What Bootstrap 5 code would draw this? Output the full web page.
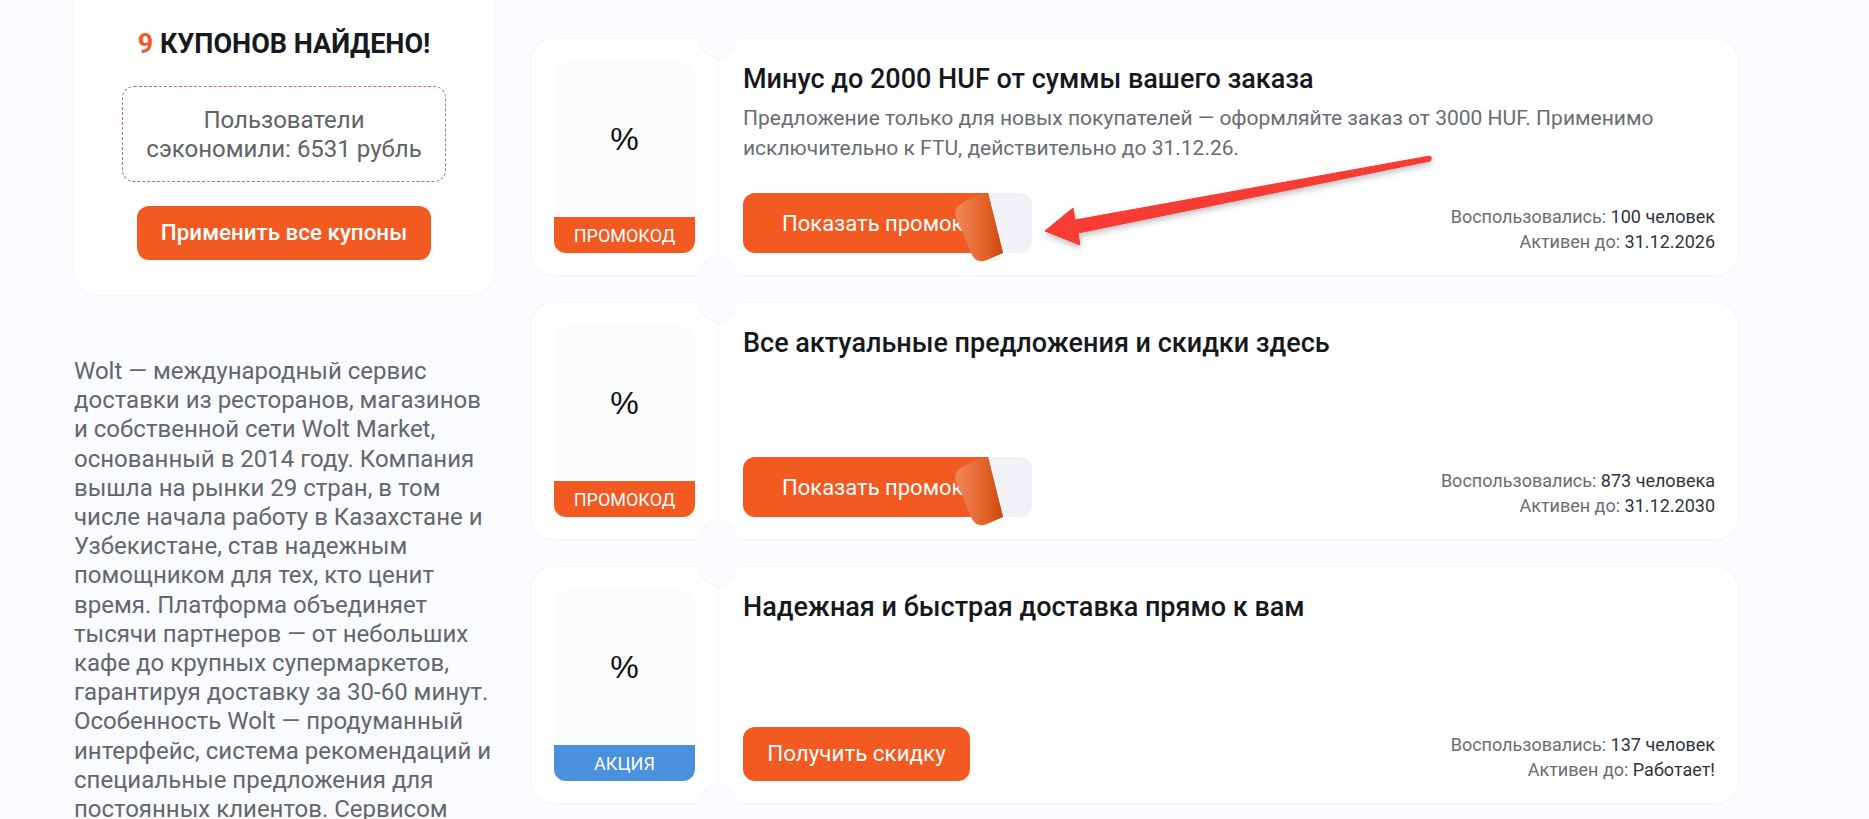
<!DOCTYPE html>
<html lang="ru">
<head>
  <meta charset="UTF-8" />
  <meta name="viewport" content="width=device-width, initial-scale=1.0" />
  <title>Купоны Wolt</title>
  <link href="https://cdn.jsdelivr.net/npm/bootstrap@5.3.3/dist/css/bootstrap.min.css" rel="stylesheet" />
  <style>
    html, body { height: 819px; overflow: hidden; }
    body { background: #fafbfe; font-family: Roboto, "Liberation Sans", sans-serif; color: #111; }
    .page-wrap { padding-left: 73px; gap: 35px; position: relative; }

    .side-col { width: 422px; flex: none; }
    .side-card {
      background: #fff;
      height: 296px;
      padding-top: 26px;
      border-radius: 0 0 26px 26px;
      border: 1px solid #f4f5fa;
      border-top: 0;
    }
    .side-title { font-size: 27px; line-height: 37px; font-weight: 700; color: #161a1f; margin: 0 0 23px; text-transform: uppercase; white-space: nowrap; }
    .side-title span { color: #ec5c28; }
    .saved-box {
      width: 324px;
      height: 96px;
      margin-bottom: 24px;
      padding-top: 19px;
      font-size: 24px;
      line-height: 29px;
      color: #5f6369;
      border: 1px dashed #c9705a;
      border-radius: 12px;
    }
    .btn-orange {
      background: #f35a22;
      color: #fff;
      border: 0;
      border-radius: 12px;
      font-size: 22.4px;
      font-weight: 400;
      height: 54px;
    }
    .btn-orange:hover { background: #e54f19; color: #fff; }
    .btn-all { width: 294px; font-weight: 500; padding: 0; }
    .side-text { margin-top: 61px; margin-left: 1px; font-size: 24px; line-height: 29.2px; color: #63676d; }

    .coupons { width: 1209px; flex: none; padding-top: 38px; gap: 26px; }
    .coupon {
      position: relative;
      height: 238px;
      background: #fff;
      border: 1px solid #f2f3f8;
      border-radius: 24px;
      padding: 23px 23px 22px;
    }
    .notch {
      position: absolute;
      left: 168px;
      width: 38px;
      height: 38px;
      border-radius: 50%;
      background: #fafbfe;
      border: 1px solid #f3f4f9;
    }
    .notch-top { top: -19px; clip-path: inset(18px 0 0 0); }
    .notch-bottom { bottom: -19px; clip-path: inset(0 0 18px 0); }
    .coupon-logo { width: 141px; flex: none; background: #fbfcfe; border-radius: 12px; overflow: hidden; }
    .logo-sign { font-family: "Liberation Sans", sans-serif; font-size: 32px; color: #111; padding-bottom: 2px; }
    .logo-label { height: 36px; line-height: 37px; font-size: 18px; color: #fff; text-transform: uppercase; background: #f35a22; }
    .logo-label.is-action { background: #4a90dc; }
    .coupon-line { flex: none; width: 0; margin: -6px 23px -6px 22px; border-left: 3px dashed #f9fafc; }
    .coupon-title { font-size: 27px; line-height: 34px; font-weight: 500; color: #15181c; margin: 0 0 7px; white-space: nowrap; }
    .coupon-desc { font-size: 21px; line-height: 30px; color: #696d73; margin: 0; white-space: nowrap; }
    .coupon-meta { font-size: 18px; line-height: 25px; color: #696d73; margin-bottom: -1px; }
    .coupon-meta span { color: #30343a; }

    .peel-btn { position: relative; width: 289px; height: 60px; background: #f1f2f8; border-radius: 12px; }
    .peel-btn .btn-orange {
      width: 100%;
      height: 60px;
      padding: 0 0 0 39px;
      text-align: left;
      font-size: 22px;
      white-space: nowrap;
      overflow: hidden;
      clip-path: polygon(0 0, 245px 0, 260px 100%, 0 100%);
    }
    .peel-fold { position: absolute; left: 210px; top: 0; pointer-events: none; }
    .btn-deal { width: 227px; padding: 0; }

    .arrow-mark { position: absolute; left: 1030px; top: 145px; pointer-events: none; }
  </style>
</head>
<body>

<div class="page-wrap d-flex align-items-start">

  <!-- Sidebar -->
  <div class="side-col">
    <div class="side-card text-center d-flex flex-column align-items-center">
      <h2 class="side-title"><span>9</span> купонов найдено!</h2>
      <div class="saved-box">Пользователи<br />сэкономили: 6531 рубль</div>
      <button class="btn btn-orange btn-all">Применить все купоны</button>
    </div>
    <div class="side-text">Wolt — международный сервис доставки из ресторанов, магазинов и собственной сети Wolt Market, основанный в 2014 году. Компания вышла на рынки 29 стран, в том числе начала работу в Казахстане и Узбекистане, став надежным помощником для тех, кто ценит время. Платформа объединяет тысячи партнеров — от небольших кафе до крупных супермаркетов, гарантируя доставку за 30-60 минут. Особенность Wolt — продуманный интерфейс, система рекомендаций и специальные предложения для постоянных клиентов. Сервисом</div>
  </div>

  <!-- Coupons -->
  <div class="coupons d-flex flex-column">

    <div class="coupon d-flex">
      <i class="notch notch-top"></i><i class="notch notch-bottom"></i>
      <div class="coupon-logo d-flex flex-column text-center">
        <div class="logo-sign flex-grow-1 d-flex align-items-center justify-content-center">%</div>
        <div class="logo-label">Промокод</div>
      </div>
      <div class="coupon-line"></div>
      <div class="flex-grow-1 d-flex flex-column justify-content-between">
        <div>
          <h3 class="coupon-title">Минус до 2000 HUF от суммы вашего заказа</h3>
          <p class="coupon-desc">Предложение только для новых покупателей — оформляйте заказ от 3000 HUF. Применимо<br />исключительно к FTU, действительно до 31.12.26.</p>
        </div>
        <div class="d-flex justify-content-between align-items-end">
          <div class="peel-btn">
            <button class="btn btn-orange">Показать промокод</button>
            <svg class="peel-fold" width="60" height="72" viewBox="0 0 60 72">
              <defs>
                <linearGradient id="fold1" x1="0" y1="0" x2="1" y2="0">
                  <stop offset="0" stop-color="#f08658" />
                  <stop offset="0.6" stop-color="#e5642c" />
                  <stop offset="1" stop-color="#c8480a" />
                </linearGradient>
              </defs>
              <path d="M35 0 L50 60 L34 67 Q24 71 19 62 L3 24 Q0 15 9 10 Q20 3 35 0 Z" fill="url(#fold1)" />
            </svg>
          </div>
          <div class="coupon-meta text-end">Воспользовались: <span>100 человек</span><br />Активен до: <span>31.12.2026</span></div>
        </div>
      </div>
    </div>

    <div class="coupon d-flex">
      <i class="notch notch-top"></i><i class="notch notch-bottom"></i>
      <div class="coupon-logo d-flex flex-column text-center">
        <div class="logo-sign flex-grow-1 d-flex align-items-center justify-content-center">%</div>
        <div class="logo-label">Промокод</div>
      </div>
      <div class="coupon-line"></div>
      <div class="flex-grow-1 d-flex flex-column justify-content-between">
        <h3 class="coupon-title">Все актуальные предложения и скидки здесь</h3>
        <div class="d-flex justify-content-between align-items-end">
          <div class="peel-btn">
            <button class="btn btn-orange">Показать промокод</button>
            <svg class="peel-fold" width="60" height="72" viewBox="0 0 60 72">
              <defs>
                <linearGradient id="fold2" x1="0" y1="0" x2="1" y2="0">
                  <stop offset="0" stop-color="#f08658" />
                  <stop offset="0.6" stop-color="#e5642c" />
                  <stop offset="1" stop-color="#c8480a" />
                </linearGradient>
              </defs>
              <path d="M35 0 L50 60 L34 67 Q24 71 19 62 L3 24 Q0 15 9 10 Q20 3 35 0 Z" fill="url(#fold2)" />
            </svg>
          </div>
          <div class="coupon-meta text-end">Воспользовались: <span>873 человека</span><br />Активен до: <span>31.12.2030</span></div>
        </div>
      </div>
    </div>

    <div class="coupon d-flex">
      <i class="notch notch-top"></i><i class="notch notch-bottom"></i>
      <div class="coupon-logo d-flex flex-column text-center">
        <div class="logo-sign flex-grow-1 d-flex align-items-center justify-content-center">%</div>
        <div class="logo-label is-action">Акция</div>
      </div>
      <div class="coupon-line"></div>
      <div class="flex-grow-1 d-flex flex-column justify-content-between">
        <h3 class="coupon-title">Надежная и быстрая доставка прямо к вам</h3>
        <div class="d-flex justify-content-between align-items-end">
          <button class="btn btn-orange btn-deal">Получить скидку</button>
          <div class="coupon-meta text-end">Воспользовались: <span>137 человек</span><br />Активен до: <span>Работает!</span></div>
        </div>
      </div>
    </div>

  </div>

  <!-- Red annotation arrow over the first coupon -->
  <svg class="arrow-mark" width="420" height="115" viewBox="1030 145 420 115">
    <defs>
      <filter id="arrowShadow" x="-10%" y="-30%" width="120%" height="170%">
        <feDropShadow dx="0" dy="3" stdDeviation="3" flood-color="#000" flood-opacity="0.25" />
      </filter>
    </defs>
    <path d="M1430 156 Q1433 158 1430 161 L1078 233 L1080 245 L1045 231 L1073 208 L1075 220 Z" fill="#f73b34" stroke="#f73b34" stroke-linejoin="round" filter="url(#arrowShadow)" />
  </svg>

</div>

<script src="https://cdn.jsdelivr.net/npm/bootstrap@5.3.3/dist/js/bootstrap.bundle.min.js"></script>
</body>
</html>
